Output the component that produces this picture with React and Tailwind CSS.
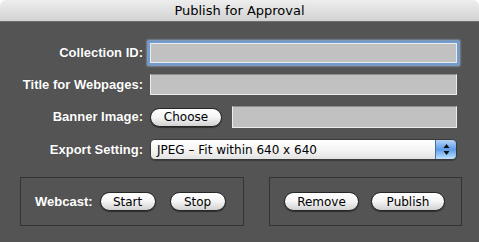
import React from "react";

const Btn = ({ children, w }) => (
  <button
    className={`h-[19px] ${w} rounded-full border border-[#262626] bg-gradient-to-b from-white via-[#f4f4f4] to-[#d2d2d2] text-[12px] leading-none text-black font-['DejaVu_Sans',sans-serif] shadow-[0_1px_1px_rgba(0,0,0,0.45)]`}
  >
    {children}
  </button>
);

const Field = ({ className = "" }) => (
  <div className={`h-[21px] bg-[#c1c1c1] border border-[#ececec] border-t-[#8d8d8d] ${className}`} />
);

const Label = ({ children }) => (
  <div className="text-right text-[13px] font-bold text-white font-['Liberation_Sans',Arial,sans-serif] [text-shadow:0_0_1px_rgba(0,0,0,0.3)]">
    {children}
  </div>
);

export default function App() {
  return (
    <div className="w-[479px] h-[242px] bg-white overflow-hidden">
      <div className="h-[22px] rounded-t-[6px] bg-gradient-to-b from-[#eeeeee] to-[#d2d2d2] border-b border-[#6c6c6c] flex items-center justify-center text-[13px] text-black font-['DejaVu_Sans',sans-serif]">
        Publish for Approval
      </div>

      <div className="h-[220px] bg-[#545454] pt-[21px]">
        <div className="grid grid-cols-[143px_307px] gap-x-[7px] items-center">
          <Label>Collection ID:</Label>
          <div className="h-[20px] bg-[#c1c1c1] border border-[#ececec] shadow-[0_0_0_2px_#6f9bd1,0_0_2px_3px_#9bbbe0]" />
        </div>

        <div className="grid grid-cols-[143px_307px] gap-x-[7px] items-center mt-[11px]">
          <Label>Title for Webpages:</Label>
          <Field />
        </div>

        <div className="grid grid-cols-[143px_307px] gap-x-[7px] items-center mt-[11px]">
          <Label>Banner Image:</Label>
          <div className="flex items-center gap-[10px]">
            <Btn w="w-[72px]">Choose</Btn>
            <Field className="flex-1 h-[22px]" />
          </div>
        </div>

        <div className="grid grid-cols-[143px_307px] gap-x-[7px] items-center mt-[11px]">
          <Label>Export Setting:</Label>
          <div className="h-[21px] flex rounded-[5px] border border-[#3a3a3a] overflow-hidden shadow-[0_1px_1px_rgba(0,0,0,0.3)]">
            <div className="flex-1 flex items-center pl-[6px] bg-gradient-to-b from-white via-[#f5f5f5] to-[#e2e2e2] text-[12px] text-black font-['DejaVu_Sans',sans-serif]">
              JPEG – Fit within 640 x 640
            </div>
            <div className="w-[21px] flex items-center justify-center border-l border-[#4a6fa5] bg-gradient-to-b from-[#b6d5f6] via-[#5d9ce8] to-[#bfe3ff]">
              <svg width="7" height="13" viewBox="0 0 7 13">
                <path d="M3.5 1 L6.5 5 L0.5 5 Z" fill="#111" />
                <path d="M0.5 8 L6.5 8 L3.5 12 Z" fill="#111" />
              </svg>
            </div>
          </div>
        </div>

        <div className="flex gap-[25px] ml-[20px] mt-[17px]">
          <div className="w-[224px] h-[49px] border border-[#333333] flex items-center pl-[14px]">
            <span className="text-[13px] font-bold text-white font-['Liberation_Sans',Arial,sans-serif] mr-[7px]">Webcast:</span>
            <Btn w="w-[56px]">Start</Btn>
            <span className="w-[14px]" />
            <Btn w="w-[56px]">Stop</Btn>
          </div>
          <div className="w-[193px] h-[49px] border border-[#333333] flex items-center pl-[14px] gap-[12px]">
            <Btn w="w-[75px]">Remove</Btn>
            <Btn w="w-[74px]">Publish</Btn>
          </div>
        </div>
      </div>
    </div>
  );
}
